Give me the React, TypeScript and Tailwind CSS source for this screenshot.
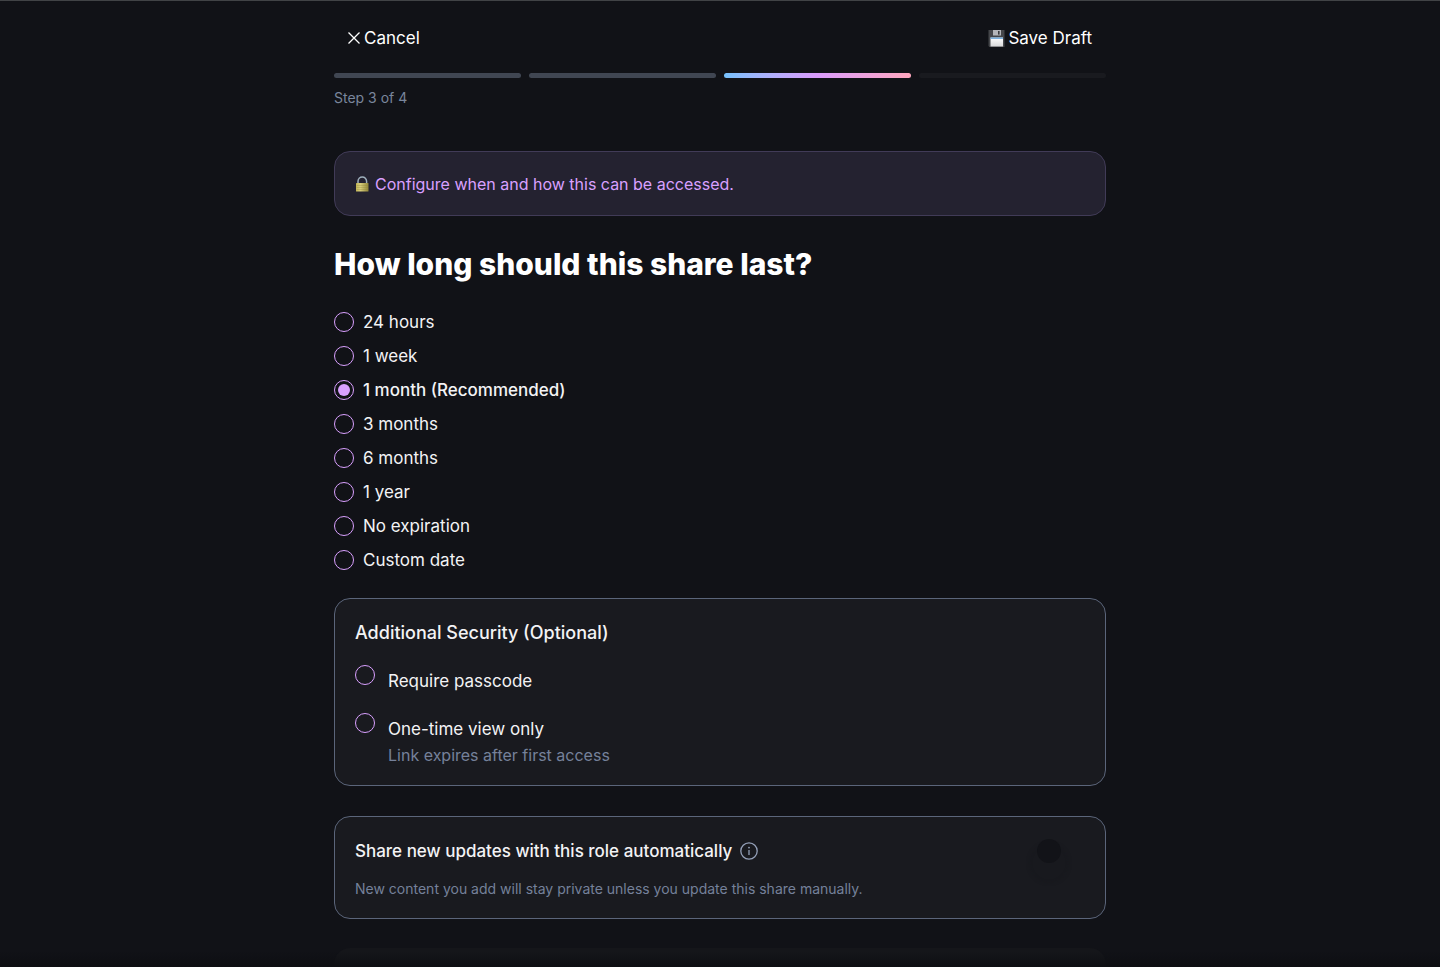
import { useState } from "react";

const durations = [
  "24 hours",
  "1 week",
  "1 month (Recommended)",
  "3 months",
  "6 months",
  "1 year",
  "No expiration",
  "Custom date",
];

const circle =
  "size-5 shrink-0 appearance-none rounded-full border border-[#d9a0ff] p-[3px] checked:bg-[#d9a0ff] checked:bg-clip-content";

const CloseIcon = () => (
  <svg width="12" height="12" viewBox="0 0 12 12" fill="none" aria-hidden="true">
    <path d="M0.5 0.5L11.5 11.5M11.5 0.5L0.5 11.5" stroke="#fff" strokeWidth="1.3" />
  </svg>
);

const FloppyIcon = () => (
  <svg width="17" height="17" viewBox="0 0 17 17" aria-hidden="true">
    <defs>
      <linearGradient id="label" x1="0" y1="0" x2="0" y2="1">
        <stop offset="0" stopColor="#ffffff" />
        <stop offset="1" stopColor="#d8d8da" />
      </linearGradient>
    </defs>
    <path d="M0.5 0H16.5V17H1.5L0.5 16Z" fill="#45464a" />
    <rect x="5" y="0" width="8" height="5.5" fill="#b4b5b9" />
    <rect x="10" y="1" width="1.6" height="3.6" fill="#3a3b3f" />
    <rect x="2.5" y="7.5" width="12.5" height="9" fill="url(#label)" />
    <rect x="2.5" y="7.5" width="12.5" height="1.4" fill="#6fa9dc" />
  </svg>
);

const LockIcon = () => (
  <svg width="14" height="16" viewBox="0 0 14 16" aria-hidden="true">
    <defs>
      <linearGradient id="brass" x1="0" y1="0" x2="1" y2="0">
        <stop offset="0" stopColor="#c2b656" />
        <stop offset="0.35" stopColor="#d8ce7c" />
        <stop offset="1" stopColor="#928637" />
      </linearGradient>
    </defs>
    <path d="M3 8V5.2a4.3 4.3 0 0 1 8.6 0v3" fill="none" stroke="#9fb0bd" strokeWidth="1.5" />
    <rect x="1" y="7" width="12.5" height="8.5" rx="0.6" fill="url(#brass)" />
    <path d="M1.5 9.5H13M1.5 11.5H13M1.5 13.5H13" stroke="#8d8238" strokeWidth="0.3" />
  </svg>
);

const InfoIcon = () => (
  <svg width="18" height="18" viewBox="0 0 18 18" fill="none" aria-hidden="true">
    <circle cx="9" cy="9" r="8.2" stroke="#94a0b8" strokeWidth="1.3" />
    <path d="M9 8V13" stroke="#94a0b8" strokeWidth="1.3" />
    <circle cx="9" cy="5.6" r="0.9" fill="#94a0b8" />
  </svg>
);

const App = () => {
  const [duration, setDuration] = useState("1 month (Recommended)");
  const [autoShare, setAutoShare] = useState(false);

  return (
    <div className="relative flex min-h-screen flex-col border-t border-[#414346] bg-[#111217] font-['Inter',sans-serif] text-[17px] leading-6 text-[#f3f3f5]">
      <main className="mx-auto flex w-full max-w-[772px] flex-1 flex-col">
        {/* HEADER */}
        <header className="flex items-center justify-between px-3.5 pt-[25px] text-white">
          <button className="flex items-center gap-1">
            <CloseIcon />
            Cancel
          </button>
          <button className="flex items-center gap-[3px]">
            <FloppyIcon />
            Save Draft
          </button>
        </header>

        {/* PROGRESS */}
        <div className="mt-[23px] grid grid-cols-4 gap-2">
          <div className="h-[5px] rounded-full bg-[#404652]" />
          <div className="h-[5px] rounded-full bg-[#404652]" />
          <div className="h-[5px] rounded-full bg-linear-to-r from-[#74c0fc] via-[#da9bfb] to-[#ffa6bd]" />
          <div className="h-[5px] rounded-full bg-[#191a1f]" />
        </div>
        <p className="mt-2.5 text-sm text-[#7a869c]">Step 3 of 4</p>

        {/* BANNER */}
        <div className="mt-[43px] flex h-[65px] items-center gap-1.5 rounded-2xl border border-[#413b57] bg-[#242230] px-5 text-base text-[#d9a0ff]">
          <LockIcon />
          <p>Configure when and how this can be accessed.</p>
        </div>

        {/* DURATION */}
        <fieldset className="mt-7">
          <legend className="text-3xl leading-10 font-extrabold text-white">
            How long should this share last?
          </legend>
          <div className="mt-[21px] flex flex-col">
            {durations.map((item) => (
              <label key={item} className="flex h-[34px] items-center gap-[9px]">
                <input
                  type="radio"
                  name="duration"
                  className={circle}
                  checked={duration === item}
                  onChange={() => setDuration(item)}
                />
                <span className={duration === item ? "font-medium" : ""}>{item}</span>
              </label>
            ))}
          </div>
        </fieldset>

        {/* SECURITY */}
        <section className="mt-[21px] rounded-2xl border border-[#5b657a] bg-[#191a1f] px-5 pt-5 pb-4">
          <h2 className="text-lg leading-7 font-medium">Additional Security (Optional)</h2>
          <label className="mt-[18px] flex items-start gap-[13px]">
            <input type="checkbox" className={circle} />
            <span className="pt-1">Require passcode</span>
          </label>
          <label className="mt-5 flex items-start gap-[13px]">
            <input type="checkbox" className={circle} />
            <span className="pt-1">
              One-time view only
              <span className="block text-base leading-7 text-[#75819a]">
                Link expires after first access
              </span>
            </span>
          </label>
        </section>

        {/* AUTO SHARE */}
        <section className="mt-[30px] rounded-2xl border border-[#5b657a] bg-[#191a1f] px-5 pt-[22px] pb-[18px]">
          <div className="flex items-center gap-2">
            <h2 id="auto-share" className="font-medium">
              Share new updates with this role automatically
            </h2>
            <button aria-label="More information">
              <InfoIcon />
            </button>
            <button
              role="switch"
              aria-checked={autoShare}
              aria-labelledby="auto-share"
              onClick={() => setAutoShare(!autoShare)}
              className={`ml-auto flex w-[52px] px-1 ${autoShare ? "justify-end" : "justify-start"}`}
            >
              <span className="size-6 rounded-full bg-[#121318] shadow-[0_12px_3px_8px_#18191e]" />
            </button>
          </div>
          <p className="mt-[15px] text-sm leading-[22px] text-[#75819a]">
            New content you add will stay private unless you update this share manually.
          </p>
        </section>

        <section className="mt-[29px] flex-1 rounded-t-2xl bg-[#15161a]" />
      </main>
      <div className="pointer-events-none absolute inset-x-0 bottom-0 h-4 bg-linear-to-t from-[#0d0e12] to-transparent" />
    </div>
  );
};

export default App;
